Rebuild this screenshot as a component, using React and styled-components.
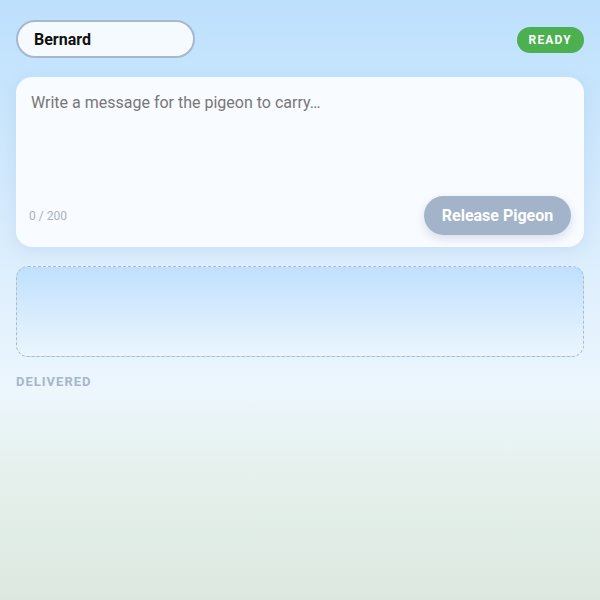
import styled, { createGlobalStyle } from 'styled-components';

const GlobalStyle = createGlobalStyle`
  html, body {
    margin: 0;
    padding: 0;
    height: 100%;
  }
  body {
    font-family: Roboto, 'Liberation Sans', sans-serif;
    background: linear-gradient(180deg, #bde0fd 0%, #d6ebfd 35%, #ecf6fd 65%, #e6f1ee 78%, #dce8df 100%);
    min-height: 600px;
  }
`;

const Page = styled.div`
  padding: 20px 16px;
  display: flex;
  flex-direction: column;
  gap: 19px;
`;

const Header = styled.div`
  display: flex;
  justify-content: space-between;
  align-items: center;
`;

const NameInput = styled.input`
  width: 179px;
  height: 38px;
  box-sizing: border-box;
  padding: 0 16px;
  border: 2px solid #a6b8cd;
  border-radius: 19px;
  background: #f5faff;
  font-family: inherit;
  font-size: 16px;
  font-weight: 700;
  color: #111;
  outline: none;
`;

const Badge = styled.span`
  height: 26px;
  margin-top: 2px;
  padding: 0 12px;
  display: flex;
  align-items: center;
  border-radius: 13px;
  background: #4caf50;
  color: #fff;
  font-size: 12px;
  font-weight: 700;
  letter-spacing: 1.2px;
`;

const Card = styled.div`
  height: 170px;
  box-sizing: border-box;
  padding: 14px 13px 12px 15px;
  background: #f8fbff;
  border-radius: 16px;
  box-shadow: 0 4px 16px rgba(120, 160, 200, 0.18);
  display: flex;
  flex-direction: column;
`;

const Message = styled.textarea`
  flex: 1;
  border: none;
  outline: none;
  resize: none;
  background: transparent;
  padding: 0;
  font-family: inherit;
  font-size: 16px;
  line-height: 24px;
  color: #333;
  &::placeholder {
    color: #777;
  }
`;

const CardFooter = styled.div`
  display: flex;
  justify-content: space-between;
  align-items: center;
`;

const Counter = styled.span`
  font-size: 12px;
  color: #a9b2bd;
  margin-left: -2px;
`;

const ReleaseButton = styled.button`
  width: 147px;
  height: 39px;
  border: none;
  border-radius: 20px;
  background: #a3b4ca;
  color: #fff;
  font-family: inherit;
  font-size: 16px;
  font-weight: 700;
  box-shadow: 0 4px 10px rgba(100, 130, 170, 0.22);
  cursor: not-allowed;
`;

const Sky = styled.div`
  height: 89px;
  border: 1px dashed #adbbca;
  border-radius: 12px;
  background: linear-gradient(180deg, #bfe0fd 0%, #d8ecfd 55%, #ebf5fd 100%);
`;

const SectionLabel = styled.div`
  margin-top: -2px;
  font-size: 13px;
  font-weight: 700;
  letter-spacing: 1px;
  color: #a7b7c8;
`;

export default function App() {
  return (
    <>
      <GlobalStyle />
      <Page>
        <Header>
          <NameInput defaultValue='Bernard' />
          <Badge>READY</Badge>
        </Header>
        <Card>
          <Message placeholder='Write a message for the pigeon to carry…' />
          <CardFooter>
            <Counter>0 / 200</Counter>
            <ReleaseButton disabled>Release Pigeon</ReleaseButton>
          </CardFooter>
        </Card>
        <Sky />
        <SectionLabel>DELIVERED</SectionLabel>
      </Page>
    </>
  );
}
